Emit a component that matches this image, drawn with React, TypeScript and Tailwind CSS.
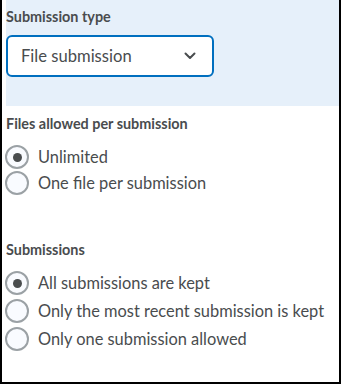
function Radio({ checked }: { checked?: boolean }) {
  return (
    <span className="flex h-6 w-6 shrink-0 items-center justify-center rounded-full border-2 border-[#9ba1a5] bg-[#f9fbff]">
      {checked && <span className="h-[9px] w-[9px] rounded-full bg-[#494c4e]" />}
    </span>
  );
}

function Option({ label, checked, tall }: { label: string; checked?: boolean; tall?: boolean }) {
  return (
    <div className={`ml-[3px] flex items-center gap-[9px] ${tall ? 'h-[28px] leading-[28px]' : 'h-[26px] leading-[26px]'}`}>
      <Radio checked={checked} />
      <span className="text-[16.4px] text-[#494c4e]">{label}</span>
    </div>
  );
}

export default function App() {
  return (
    <div
      className="h-[384px] w-[341px] border-b-2 border-l-2 border-r-2 border-black bg-white"
      style={{ fontFamily: 'Lato, "Noto Sans", sans-serif' }}
    >
      <div className="ml-1 h-[106px] bg-[#e6f0fa] pt-[7px]">
        <div className="text-[14.4px] font-bold leading-5 text-[#494c4e]">Submission type</div>
        <div className="mt-2 flex h-[42px] w-[208px] items-center justify-between rounded-[6px] border-2 border-[#006fbf] bg-white pl-[13px] pr-[16px]">
          <span className="text-[16.6px] text-[#494c4e]">File submission</span>
          <svg width="12" height="8" viewBox="0 0 12 8" fill="none">
            <path d="M1.5 1.5 6 6l4.5-4.5" stroke="#494c4e" strokeWidth="2" strokeLinecap="round" strokeLinejoin="round" />
          </svg>
        </div>
      </div>

      <div className="ml-1 mt-2 text-[14.4px] font-bold leading-5 text-[#494c4e]">Files allowed per submission</div>
      <div className="mt-[10px]">
        <Option label="Unlimited" checked />
        <Option label="One file per submission" />
      </div>

      <div className="ml-1 mt-[44px] text-[14.4px] font-bold leading-5 text-[#494c4e]">Submissions</div>
      <div className="mt-[9px]">
        <Option label="All submissions are kept" checked tall />
        <Option label="Only the most recent submission is kept" tall />
        <Option label="Only one submission allowed" tall />
      </div>
    </div>
  );
}
